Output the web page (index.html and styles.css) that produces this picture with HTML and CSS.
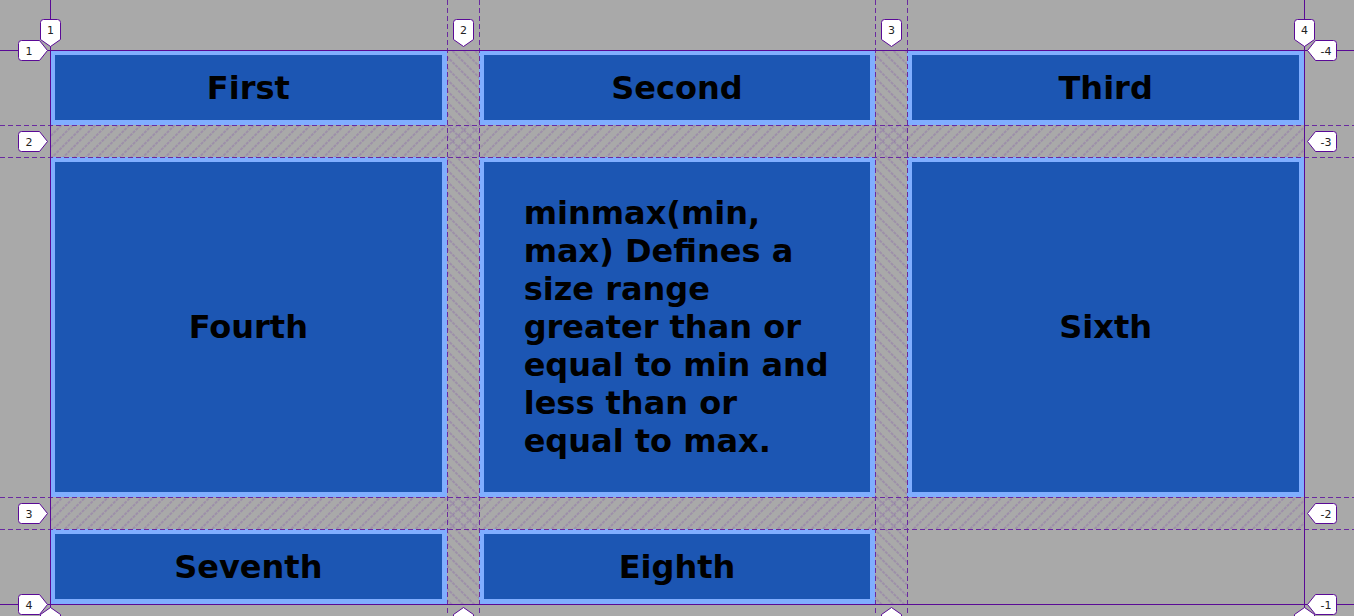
FILE: index.html
```html
<!DOCTYPE html>
<html lang="en">
<head>
    <meta charset="UTF-8">
    <meta name="viewport" content="width=device-width, initial-scale=1.0">
    <title>Grid</title>
    <link rel="stylesheet" href="styles.css">
</head>
<body>

    <div class="grid">
        <div class="item">First</div>
        <div class="item">Second</div>
        <div class="item">Third</div>
        <div class="item">Fourth</div>
        <div class="item long">minmax(min, max) Defines a size range greater than or equal to min and less than or equal to max.</div>
        <div class="item">Sixth</div>
        <div class="item">Seventh</div>
        <div class="item">Eighth</div>
    </div>

    <!-- grid inspector overlay -->
    <svg class="overlay" width="1354" height="616" viewBox="0 0 1354 616">
        <defs>
            <pattern id="hatchRow" width="8" height="8" patternUnits="userSpaceOnUse" patternTransform="rotate(-45)">
                <line class="hatch" x1="0" y1="4" x2="8" y2="4"/>
            </pattern>
            <pattern id="hatchCol" width="8" height="8" patternUnits="userSpaceOnUse" patternTransform="rotate(45)">
                <line class="hatch" x1="0" y1="4" x2="8" y2="4"/>
            </pattern>
        </defs>

        <!-- gaps -->
        <rect x="50" y="125" width="1254" height="32" fill="url(#hatchRow)"/>
        <rect x="50" y="497" width="1254" height="32" fill="url(#hatchRow)"/>
        <rect x="447" y="50" width="32" height="554" fill="url(#hatchCol)"/>
        <rect x="875" y="50" width="32" height="554" fill="url(#hatchCol)"/>

        <!-- track lines -->
        <line class="dash" x1="447.5" y1="0" x2="447.5" y2="616"/>
        <line class="dash" x1="479.5" y1="0" x2="479.5" y2="616"/>
        <line class="dash" x1="875.5" y1="0" x2="875.5" y2="616"/>
        <line class="dash" x1="907.5" y1="0" x2="907.5" y2="616"/>
        <line class="dash" x1="0" y1="125.5" x2="1354" y2="125.5"/>
        <line class="dash" x1="0" y1="157.5" x2="1354" y2="157.5"/>
        <line class="dash" x1="0" y1="497.5" x2="1354" y2="497.5"/>
        <line class="dash" x1="0" y1="529.5" x2="1354" y2="529.5"/>

        <!-- container edges -->
        <line class="edge" x1="50.5" y1="0" x2="50.5" y2="616"/>
        <line class="edge" x1="1304.5" y1="0" x2="1304.5" y2="616"/>
        <line class="edge" x1="0" y1="50.5" x2="1354" y2="50.5"/>
        <line class="edge" x1="0" y1="604.5" x2="1354" y2="604.5"/>

        <!-- column numbers -->
        <g class="label" transform="translate(50.5,46.5)"><path d="M0,0 l-10,-7 v-17 a3,3 0 0 1 3,-3 h14 a3,3 0 0 1 3,3 v17 z"/><text x="0" y="-13">1</text></g>
        <g class="label" transform="translate(463.5,46.5)"><path d="M0,0 l-10,-7 v-17 a3,3 0 0 1 3,-3 h14 a3,3 0 0 1 3,3 v17 z"/><text x="0" y="-13">2</text></g>
        <g class="label" transform="translate(891.5,46.5)"><path d="M0,0 l-10,-7 v-17 a3,3 0 0 1 3,-3 h14 a3,3 0 0 1 3,3 v17 z"/><text x="0" y="-13">3</text></g>
        <g class="label" transform="translate(1304.5,46.5)"><path d="M0,0 l-10,-7 v-17 a3,3 0 0 1 3,-3 h14 a3,3 0 0 1 3,3 v17 z"/><text x="0" y="-13">4</text></g>

        <g class="label" transform="translate(50.5,607.5)"><path d="M0,0 l10,7 v20 h-20 v-20 z"/></g>
        <g class="label" transform="translate(463.5,607.5)"><path d="M0,0 l10,7 v20 h-20 v-20 z"/></g>
        <g class="label" transform="translate(891.5,607.5)"><path d="M0,0 l10,7 v20 h-20 v-20 z"/></g>
        <g class="label" transform="translate(1304.5,607.5)"><path d="M0,0 l10,7 v20 h-20 v-20 z"/></g>

        <!-- row numbers -->
        <g class="label" transform="translate(47.5,50.5)"><path d="M0,0 l-8,-10 h-18 a3,3 0 0 0 -3,3 v14 a3,3 0 0 0 3,3 h18 z"/><text x="-18.5" y="4">1</text></g>
        <g class="label" transform="translate(47.5,141.5)"><path d="M0,0 l-8,-10 h-18 a3,3 0 0 0 -3,3 v14 a3,3 0 0 0 3,3 h18 z"/><text x="-18.5" y="4">2</text></g>
        <g class="label" transform="translate(47.5,513.5)"><path d="M0,0 l-8,-10 h-18 a3,3 0 0 0 -3,3 v14 a3,3 0 0 0 3,3 h18 z"/><text x="-18.5" y="4">3</text></g>
        <g class="label" transform="translate(47.5,604.5)"><path d="M0,0 l-8,-10 h-18 a3,3 0 0 0 -3,3 v14 a3,3 0 0 0 3,3 h18 z"/><text x="-18.5" y="4">4</text></g>

        <g class="label" transform="translate(1307.5,50.5)"><path d="M0,0 l8,-10 h18 a3,3 0 0 1 3,3 v14 a3,3 0 0 1 -3,3 h-18 z"/><text x="18.5" y="4">-4</text></g>
        <g class="label" transform="translate(1307.5,141.5)"><path d="M0,0 l8,-10 h18 a3,3 0 0 1 3,3 v14 a3,3 0 0 1 -3,3 h-18 z"/><text x="18.5" y="4">-3</text></g>
        <g class="label" transform="translate(1307.5,513.5)"><path d="M0,0 l8,-10 h18 a3,3 0 0 1 3,3 v14 a3,3 0 0 1 -3,3 h-18 z"/><text x="18.5" y="4">-2</text></g>
        <g class="label" transform="translate(1307.5,604.5)"><path d="M0,0 l8,-10 h18 a3,3 0 0 1 3,3 v14 a3,3 0 0 1 -3,3 h-18 z"/><text x="18.5" y="4">-1</text></g>
    </svg>

</body>
</html>
```

FILE: styles.css
```css
body {
    margin: 0;
    background-color: #a9a9a9;
    font-family: "DejaVu Sans", sans-serif;
}

.grid {
    display: grid;
    grid-template-columns: repeat(3, 1fr);
    grid-template-rows: 75px 340px 75px;
    gap: 32px;
    margin: 50px 50px 0;
}

.item {
    display: flex;
    align-items: center;
    justify-content: center;
    background-color: #1c56b3;
    border: 5px solid #80aeff;
    color: #000;
    font-size: 32px;
    font-weight: bold;
}

.item.long {
    justify-content: flex-start;
    padding: 0 40px;
}

/* overlay drawn over the grid */
.overlay {
    position: absolute;
    top: 0;
    left: 0;
    pointer-events: none;
}

.hatch {
    stroke: rgba(110, 40, 170, 0.4);
    stroke-width: 1;
    stroke-dasharray: 3 1;
}

.dash {
    stroke: #6a2aa0;
    stroke-width: 1;
    stroke-dasharray: 5 3;
}

.edge {
    stroke: #5a0a96;
    stroke-width: 1;
}

.label path {
    fill: #fff;
    stroke: #5a0a96;
    stroke-width: 1;
}

.label text {
    font-family: "DejaVu Sans", sans-serif;
    font-size: 11px;
    fill: #222;
    text-anchor: middle;
}
```
